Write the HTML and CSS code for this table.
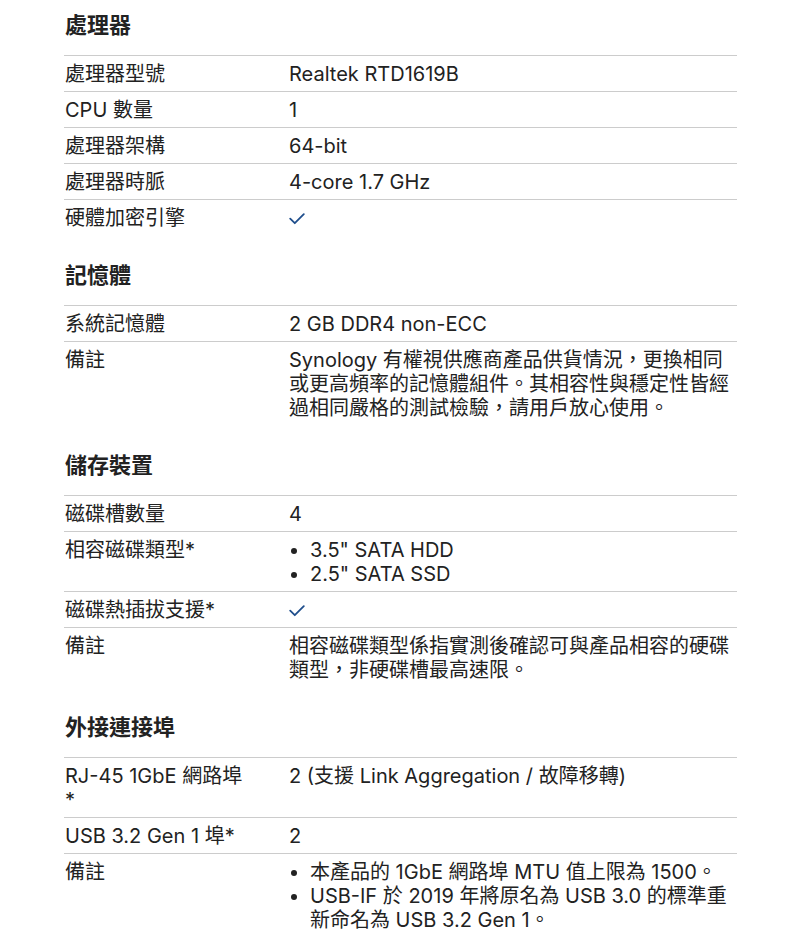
FILE: index.html
```html
<!DOCTYPE html>
<html lang="zh-TW">
<head>
<meta charset="utf-8">
<link rel="stylesheet" href="styles.css">
</head>
<body>
<div class="specs">
  <section class="group">
    <h2 class="group-title">處理器</h2>
    <div class="row"><div class="label">處理器型號</div><div class="value">Realtek RTD1619B</div></div>
    <div class="row"><div class="label">CPU 數量</div><div class="value">1</div></div>
    <div class="row"><div class="label">處理器架構</div><div class="value">64-bit</div></div>
    <div class="row"><div class="label">處理器時脈</div><div class="value">4-core 1.7 GHz</div></div>
    <div class="row"><div class="label">硬體加密引擎</div><div class="value"><svg class="check" width="16" height="12" viewBox="0 0 16 12"><path d="M1.2 5.6 L5.8 10.2 L14.8 1.2" fill="none" stroke="#1f4e8c" stroke-width="1.8" stroke-linecap="round" stroke-linejoin="round"/></svg></div></div>
  </section>
  <section class="group">
    <h2 class="group-title">記憶體</h2>
    <div class="row"><div class="label">系統記憶體</div><div class="value">2 GB DDR4 non-ECC</div></div>
    <div class="row"><div class="label">備註</div><div class="value">Synology 有權視供應商產品供貨情況，更換相同或更高頻率的記憶體組件。其相容性與穩定性皆經過相同嚴格的測試檢驗，請用戶放心使用。</div></div>
  </section>
  <section class="group">
    <h2 class="group-title">儲存裝置</h2>
    <div class="row"><div class="label">磁碟槽數量</div><div class="value">4</div></div>
    <div class="row"><div class="label">相容磁碟類型*</div><div class="value"><ul class="list"><li>3.5" SATA HDD</li><li>2.5" SATA SSD</li></ul></div></div>
    <div class="row"><div class="label">磁碟熱插拔支援*</div><div class="value"><svg class="check" width="16" height="12" viewBox="0 0 16 12"><path d="M1.2 5.6 L5.8 10.2 L14.8 1.2" fill="none" stroke="#1f4e8c" stroke-width="1.8" stroke-linecap="round" stroke-linejoin="round"/></svg></div></div>
    <div class="row"><div class="label">備註</div><div class="value">相容磁碟類型係指實測後確認可與產品相容的硬碟類型，非硬碟槽最高速限。</div></div>
  </section>
  <section class="group">
    <h2 class="group-title">外接連接埠</h2>
    <div class="row"><div class="label">RJ-45 1GbE 網路埠 *</div><div class="value">2 (支援 Link Aggregation / 故障移轉)</div></div>
    <div class="row"><div class="label">USB 3.2 Gen 1 埠*</div><div class="value">2</div></div>
    <div class="row"><div class="label">備註</div><div class="value"><ul class="list"><li>本產品的 1GbE 網路埠 MTU 值上限為 1500。</li><li>USB-IF 於 2019 年將原名為 USB 3.0 的標準重新命名為 USB 3.2 Gen 1。</li></ul></div></div>
  </section>
</div>
</body>
</html>
```
FILE: styles.css
```css
html, body {
  margin: 0;
  padding: 0;
  background: #ffffff;
}
body {
  font-family: Inter, "Noto Sans CJK TC", sans-serif;
  color: #222222;
  font-size: 20px;
  line-height: 24px;
}
.specs {
  margin-left: 64px;
  width: 673px;
  padding-top: 11px;
}
.group {
  margin-bottom: 26px;
}
.group-title {
  margin: 0 0 16px 1px;
  font-size: 22px;
  line-height: 28px;
  font-weight: 700;
}
.row {
  display: grid;
  grid-template-columns: 225px 448px;
  border-top: 1px solid #cccccc;
  padding: 6px 0 5px;
}
.label {
  padding-left: 1px;
  padding-right: 40px;
}
.value {
  min-height: 24px;
}
.check {
  display: block;
  margin-top: 7px;
}
.list {
  margin: 0;
  padding: 0 0 0 21px;
}
.list li {
  padding-left: 0;
}
```
